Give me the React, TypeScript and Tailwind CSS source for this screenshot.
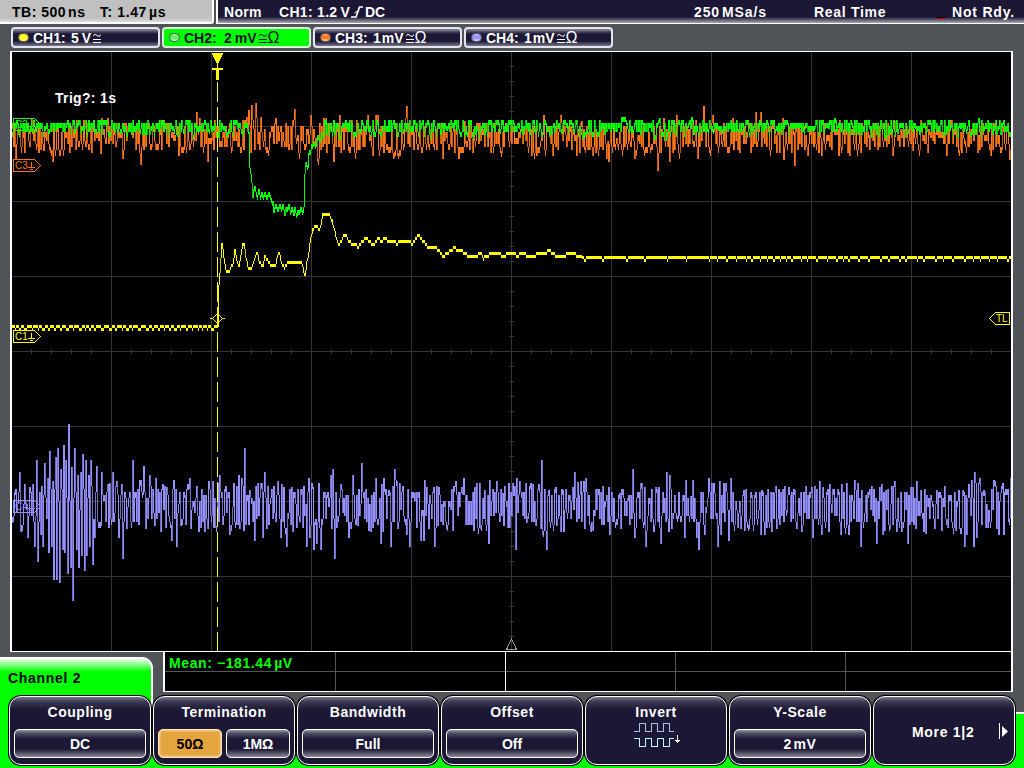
import React from "react";
import clsx from "clsx";

type Point = [number, number];

const LEFT = 12;
const RIGHT = 1011;

// Small seeded generator so the noise is the same on every render
function makeRandom(seed: number) {
  let s = seed;
  return () => {
    s = (s * 1664525 + 1013904223) % 4294967296;
    return s / 4294967296;
  };
}

// The scope draws in 3px vertical steps
const snap = (y: number) => Math.round(y / 3) * 3;

function noise(center: number, spread: number, hold: number, seed: number) {
  const rand = makeRandom(seed);
  const values: number[] = [];
  let current = center;
  for (let x = LEFT; x < RIGHT; x++) {
    if (rand() > hold) {
      // mostly swings to the other side of the center line
      const sign = current > center ? -1 : 1;
      const side = rand() < 0.8 ? sign : -sign;
      const size = (rand() + rand()) / 2;
      current = center + side * size * spread;
    }
    values.push(snap(current));
  }
  return values;
}

function withSpikes(values: number[], spikes: Point[]) {
  const out = [...values];
  spikes.forEach(([x, y]) => {
    if (x >= LEFT && x < RIGHT) out[x - LEFT] = y;
  });
  return out;
}

function withCurve(values: number[], points: Point[]) {
  const out = [...values];
  for (let i = 1; i < points.length; i++) {
    const [x0, y0] = points[i - 1];
    const [x1, y1] = points[i];
    for (let x = x0; x <= x1; x++) {
      out[x - LEFT] = snap(y0 + ((y1 - y0) * (x - x0)) / Math.max(1, x1 - x0));
    }
  }
  return out;
}

// One vertical bar per pixel column, some of the long edges go in the dim path
function toBars(values: number[], minHeight = 3) {
  let bright = "";
  let dim = "";
  values.forEach((v, i) => {
    const prev = i === 0 ? v : values[i - 1];
    const top = Math.min(v, prev);
    const height = Math.max(minHeight, Math.abs(v - prev));
    const bar = `M${LEFT + i} ${top}h1v${height}h-1z`;
    if (height > 6 && (i * 7) % 5 < 2) dim += bar;
    else bright += bar;
  });
  return { bright, dim };
}

const CH1_CURVE: Point[] = [
  [217, 328], [218, 285], [219, 272], [221, 243], [223, 257], [225, 269], [229, 269], [232, 263], [234, 250], [236, 262],
  [238, 267], [240, 255], [242, 242], [243, 242], [245, 258], [247, 266], [251, 267], [254, 258], [256, 251], [258, 260],
  [262, 266], [264, 254], [267, 262], [272, 264], [275, 263], [278, 251], [280, 261], [284, 267], [287, 261], [290, 260],
  [292, 263], [294, 260], [300, 261], [302, 268], [304, 276], [306, 262], [308, 252], [310, 236], [312, 229], [314, 224],
  [316, 226], [318, 230], [320, 225], [322, 213], [328, 213], [331, 220], [334, 232], [336, 241], [339, 243], [344, 233],
  [348, 241], [354, 243], [358, 246], [361, 241], [365, 236], [369, 241], [373, 245], [377, 237], [380, 240], [385, 237],
  [388, 242], [391, 239], [396, 243], [401, 239], [404, 242], [408, 239], [411, 243], [414, 239], [418, 234], [421, 239],
  [427, 246], [434, 246], [438, 250], [442, 255], [448, 251], [453, 247], [459, 249], [465, 253], [469, 257], [474, 254],
  [480, 253], [482, 258], [486, 254], [498, 251], [502, 258], [504, 254], [512, 251], [516, 255], [520, 252], [530, 255],
  [535, 254], [539, 251], [545, 253], [547, 249], [554, 254], [562, 255], [567, 253], [571, 251], [576, 255], [580, 256],
];

const CH2_CURVE: Point[] = [
  [247, 130], [248, 132], [249, 168], [250, 174], [251, 184], [252, 198], [253, 189], [254, 186], [255, 192], [257, 195],
  [258, 190], [259, 196], [261, 193], [262, 199], [264, 193], [266, 197], [268, 191], [270, 199], [272, 201], [273, 213],
  [275, 203], [277, 210], [279, 204], [281, 210], [282, 204], [284, 216], [285, 206], [287, 210], [288, 204], [290, 213],
  [291, 207], [293, 215], [294, 208], [296, 216], [297, 209], [299, 213], [300, 207], [302, 214], [303, 207], [304, 175],
  [305, 163], [307, 169], [308, 152], [310, 150], [311, 143], [312, 148], [313, 141], [315, 147], [317, 136], [319, 141],
  [321, 132], [323, 136],
];

const CH2_SPIKES: Point[] = [
  [132, 120], [161, 120], [189, 120], [204, 120], [218, 138], [226, 135], [427, 120], [433, 120], [512, 120], [625, 120],
  [659, 118], [678, 120], [773, 120], [834, 118], [871, 138], [884, 138], [957, 138], [978, 118], [1003, 120], [665, 141],
];

const CH3_SPIKES: Point[] = [
  [15, 159], [20, 147], [31, 118], [38, 153], [43, 151], [52, 162], [59, 153], [83, 120], [100, 154], [101, 118],
  [107, 118], [122, 159], [135, 150], [140, 165], [155, 150], [178, 156], [189, 150], [196, 112], [199, 118], [207, 162],
  [213, 150], [231, 151], [240, 151], [244, 120], [246, 117], [248, 110], [249, 125], [251, 105], [252, 120], [255, 103],
  [256, 118], [260, 117], [265, 150], [275, 118], [285, 123], [294, 109], [304, 144], [310, 115], [317, 162], [318, 159],
  [323, 118], [325, 118], [333, 162], [339, 115], [348, 151], [357, 150], [367, 115], [372, 156], [375, 115], [377, 115],
  [387, 150], [394, 152], [397, 156], [405, 118], [406, 106], [421, 153], [442, 159], [458, 159], [464, 121], [472, 153],
  [490, 153], [500, 151], [531, 156], [536, 156], [543, 115], [552, 156], [560, 115], [576, 156], [581, 121], [592, 156],
  [606, 159], [608, 162], [634, 159], [644, 153], [657, 171], [663, 118], [669, 162], [672, 153], [676, 115], [697, 159],
  [703, 106], [709, 150], [712, 115], [732, 118], [750, 153], [755, 112], [760, 112], [776, 153], [782, 118], [783, 160],
  [791, 153], [794, 166], [807, 156], [821, 156], [838, 156], [849, 156], [855, 121], [877, 150], [892, 156], [895, 121],
  [912, 151], [946, 156], [958, 153], [961, 153], [990, 156], [1009, 160],
];

const CH4_SPIKES: Point[] = [
  [12, 517], [19, 472], [20, 532], [24, 484], [27, 538], [29, 487], [32, 484], [34, 547], [36, 460], [37, 562],
  [40, 535], [42, 547], [44, 463], [47, 478], [48, 553], [49, 451], [51, 547], [52, 481], [53, 580], [55, 457],
  [56, 580], [57, 448], [59, 583], [60, 469], [62, 550], [63, 445], [64, 553], [65, 460], [67, 574], [68, 424],
  [70, 568], [71, 467], [72, 601], [74, 448], [76, 550], [77, 475], [78, 568], [80, 472], [81, 556], [82, 454],
  [84, 571], [85, 460], [86, 556], [88, 475], [89, 547], [90, 460], [92, 565], [94, 538], [96, 466], [100, 526],
  [101, 472], [107, 484], [112, 472], [116, 481], [118, 538], [121, 484], [122, 559], [126, 529], [132, 460], [143, 466],
  [145, 529], [149, 475], [154, 526], [155, 478], [160, 532], [162, 484], [166, 487], [171, 541], [176, 547], [180, 526],
  [187, 484], [189, 478], [190, 529], [198, 532], [204, 532], [207, 529], [208, 481], [212, 481], [216, 526], [219, 475],
  [229, 535], [238, 475], [239, 529], [241, 478], [244, 448], [249, 490], [254, 541], [262, 538], [264, 472], [266, 529],
  [277, 481], [280, 538], [281, 484], [283, 487], [286, 547], [291, 487], [292, 532], [306, 547], [308, 478], [309, 538],
  [312, 487], [313, 550], [316, 544], [320, 550], [330, 475], [331, 529], [332, 469], [334, 559], [340, 484], [348, 538],
  [350, 529], [352, 475], [357, 526], [361, 463], [370, 532], [375, 478], [380, 544], [381, 484], [382, 532], [383, 478],
  [388, 490], [390, 547], [394, 469], [396, 481], [397, 529], [406, 535], [409, 547], [413, 493], [420, 541], [423, 541],
  [426, 487], [428, 529], [433, 487], [434, 547], [437, 526], [438, 487], [446, 529], [455, 481], [461, 487], [463, 478],
  [474, 487], [480, 529], [484, 490], [488, 544], [496, 481], [502, 493], [503, 526], [513, 496], [515, 550], [516, 478],
  [519, 481], [526, 523], [532, 484], [535, 526], [538, 484], [540, 529], [541, 460], [542, 535], [546, 550], [548, 490],
  [555, 487], [556, 526], [560, 532], [562, 490], [563, 532], [572, 487], [574, 472], [577, 482], [580, 481], [583, 481],
  [584, 529], [585, 478], [590, 532], [608, 487], [609, 535], [619, 493], [620, 529], [632, 469], [634, 538], [644, 487],
  [645, 547], [653, 532], [655, 487], [658, 487], [660, 544], [666, 472], [668, 532], [669, 475], [671, 529], [684, 538],
  [690, 496], [696, 538], [698, 550], [704, 535], [708, 478], [714, 493], [717, 547], [719, 481], [720, 535], [728, 541],
  [730, 478], [740, 529], [743, 490], [748, 529], [760, 535], [761, 490], [764, 535], [771, 532], [774, 493], [776, 529],
  [788, 487], [794, 490], [796, 529], [801, 532], [811, 487], [812, 538], [819, 481], [821, 535], [822, 487], [828, 532],
  [829, 484], [840, 535], [841, 484], [848, 535], [855, 490], [860, 547], [861, 490], [876, 544], [879, 487], [881, 484],
  [882, 535], [885, 490], [889, 529], [894, 481], [896, 532], [901, 532], [907, 544], [910, 487], [912, 487], [915, 529],
  [916, 481], [920, 490], [923, 532], [934, 529], [936, 490], [958, 490], [959, 529], [962, 490], [964, 547], [966, 535],
  [968, 484], [973, 547], [974, 472], [976, 538], [979, 478], [983, 490], [994, 481], [996, 529], [998, 535], [1000, 493],
  [1003, 535], [1010, 478],
];

// CH1 flips between two adjacent levels when it is idle
function idleCh1() {
  const rand = makeRandom(11);
  const values: number[] = [];
  let high = true;
  let left = 3;
  for (let x = LEFT; x < RIGHT; x++) {
    left -= 1;
    if (left <= 0) {
      high = !high;
      left = x < 217 ? 2 + Math.floor(rand() * 3) : high ? 3 + Math.floor(rand() * 7) : 2 + Math.floor(rand() * 2);
      if (x > 580 && x < 700 && high) left += 12;
    }
    if (x < 217) values.push(high ? 325 : 328);
    else values.push(high ? 256 : 259);
  }
  return values;
}

const ch1 = toBars(withCurve(idleCh1(), CH1_CURVE));
const ch2 = toBars(withCurve(withSpikes(noise(127, 9, 0.15, 5), CH2_SPIKES), CH2_CURVE), 5);
const ch3 = toBars(withSpikes(noise(137, 18, 0.2, 29), CH3_SPIKES), 6);
const ch4 = toBars(withSpikes(noise(506, 28, 0.12, 83), CH4_SPIKES), 6);

function Trace({ bars, color }: { bars: { bright: string; dim: string }; color: string }) {
  return (
    <g fill={color}>
      <path d={bars.dim} opacity={0.75} />
      <path d={bars.bright} />
    </g>
  );
}

function Flag({ y, label, color }: { y: number; label: string; color: string }) {
  return (
    <g stroke={color} fill="none">
      <path d={`M13.5 ${y + 0.5}H34.5L40.5 ${y + 6.5}L34.5 ${y + 12.5}H13.5z`} />
      <path d={`M31.5 ${y + 3}v5M28 ${y + 8.5}h7M30 ${y + 10.5}h3`} />
      <text x={15} y={y + 10} fontSize={10} fill={color} stroke="none">
        {label}
      </text>
    </g>
  );
}

function Plot() {
  const columns = [111, 211, 311, 411, 511, 611, 711, 811, 911];
  const rows = [126, 201, 276, 351, 426, 501, 576];
  const ticks: string[] = [];
  for (let x = 31; x < RIGHT; x += 20) ticks.push(`M${x} 349h1v5h-1z`);
  for (let y = 66; y < 650; y += 15) ticks.push(`M509 ${y}h5v1h-5z`);

  return (
    <svg
      width={999}
      height={599}
      viewBox="12 52 999 599"
      shapeRendering="crispEdges"
      fontFamily="Liberation Sans, sans-serif"
      fontWeight={400}
      className="block"
    >
      <path
        fill="#363636"
        d={columns.map((x) => `M${x} 52h1v599h-1z`).join("") + rows.map((y) => `M12 ${y}h999v1h-999z`).join("") + ticks.join("")}
      />
      <path d="M506.5 649.5L511.5 639L516.5 649.5z" fill="none" stroke="#999" />

      <Trace bars={ch4} color="#9490ff" />
      <Flag y={500} label="C4" color="#9490ff" />
      <Trace bars={ch3} color="#ff7518" />
      <Flag y={159} label="C3" color="#ff7518" />
      <Flag y={118} label="C2" color="#00ff00" />
      <Trace bars={ch2} color="#00ff00" />

      {/* Trigger position */}
      <path d="M217.5 82V651" stroke="#ffff00" strokeDasharray="20 5" />
      <path d="M212 53h11v2h-1v2h-1v2h-1v2h-1v2h-1v5h5v2h-4v10h-3v-10h-4v-2h5v-5h-1v-2h-1v-2h-1v-2h-1v-2h-1z" fill="#ffff00" />

      <Trace bars={ch1} color="#ffff00" />
      <Flag y={330} label="C1" color="#ffff00" />
      <path d="M210 318.5h3M222 318.5h3M212.5 318.5l5-5l5 5l-5 5z" fill="none" stroke="#ffff00" />

      {/* Trigger level */}
      <path d="M989.5 318.5l6-6h14v12h-14z" fill="none" stroke="#ffff00" />
      <text x={996} y={322} fontSize={10} fill="#ffff00">
        TL
      </text>

      <text x={55} y={103} fontSize={14} fontWeight={700} fill="#fff" textLength={61}>
        Trig?: 1s
      </text>
    </svg>
  );
}

const channels = [
  { name: "CH1:", value: "5", unit: "V", ohm: false, dot: "bg-[#ffff00]", active: false },
  { name: "CH2:", value: "2", unit: "mV", ohm: true, dot: "bg-[#60f060]", active: true },
  { name: "CH3:", value: "1", unit: "mV", ohm: true, dot: "bg-[#ff7518]", active: false },
  { name: "CH4:", value: "1", unit: "mV", ohm: true, dot: "bg-[#9490ff]", active: false },
];

function CouplingIcon() {
  return (
    <svg width="8" height="10" viewBox="0 0 8 10" fill="none" stroke="currentColor" className="ml-[2px]">
      <path d="M0.500 3.200V2.500Q0.700 1.500 2 1.500Q3 1.500 4 2.500Q5 3.300 6 3.300Q7.500 3.200 7.500 1.500" />
      <path d="M0 6.500h8M0 9.500h8" shapeRendering="crispEdges" />
    </svg>
  );
}

function ChannelTab({ channel }: { channel: (typeof channels)[number] }) {
  return (
    <div
      className={clsx(
        "flex h-[21px] w-[149px] items-center rounded-[4px] border-2 pl-[5px] text-[14px]",
        channel.active
          ? "border-[#d8ffd8] bg-[#00ff00] text-[#10102c]"
          : "border-[#e4e4ec] bg-[linear-gradient(#8b899c_0,#1b1734_5px,#1b1734_12px,#77758a_17px)] text-white"
      )}
    >
      <span
        className={clsx(
          "h-[9px] w-[11px] rounded-full border border-[#555] bg-[linear-gradient(#ffffff60,transparent_40%,transparent_60%,#ffffffb0)]",
          channel.dot
        )}
      ></span>
      <span className="ml-[4px] w-[38px] pt-px">{channel.name}</span>
      <span className={clsx("pt-px", channel.active && "ml-[2px]")}>{channel.value}</span>
      <span className={clsx("pt-px", channel.value === "1" ? "ml-px" : "ml-[3px]")}>{channel.unit}</span>
      <CouplingIcon />
      {channel.ohm && <span className="ml-px pt-px text-[16px] font-normal">Ω</span>}
    </div>
  );
}

function MenuButton({ title, children }: { title?: string; children: React.ReactNode }) {
  return (
    <div className="h-[71px] w-[144px] rounded-[13px] bg-black p-px">
      <div className="flex h-full flex-col rounded-[12px] border border-white bg-[linear-gradient(#77758c_0,#3a3751_5px,#1b1734_13px)] px-[4px] pt-[7px]">
        {title && <div className="h-[17px] text-center leading-[17px] tracking-[0.55px]">{title}</div>}
        {children}
      </div>
    </div>
  );
}

function Field({ children, selected = false }: { children: React.ReactNode; selected?: boolean }) {
  return (
    <div
      className={clsx(
        "flex h-[29px] flex-1 items-center justify-center rounded-[5px] border pt-px",
        selected
          ? "border-[#ffe6bf] bg-[#e5a53e] text-black shadow-[inset_0_0_3px_#fff]"
          : "border-white bg-[linear-gradient(#9896a6_0,#55536a_3px,#1b1734_9px,#1b1734_19px,#8a8898_27px)]"
      )}
    >
      {children}
    </div>
  );
}

export default function App() {
  return (
    <div className="flex h-[768px] w-[1024px] flex-col overflow-hidden bg-[#505357] font-['Liberation_Sans',Arial,sans-serif] text-[14px] font-bold whitespace-nowrap text-white">
      {/* Status bar */}
      <header className="flex h-[24px] gap-[2px] leading-[22px]">
        <div className="flex w-[214px] rounded-br-[3px] border-r-2 border-b-2 border-white bg-[linear-gradient(#c0c0c0_18px,#ddd)] pt-px pl-[12px] text-black">
          <span className="w-[88px] tracking-[0.5px]">TB: 500<span className="ml-[2px]">ns</span></span>
          <span className="tracking-[0.6px]">T: 1.47<span className="ml-[2px]">µs</span></span>
        </div>
        <div className="flex flex-1 border-b border-l-2 border-white bg-[linear-gradient(#1b1734_17px,#aaa9b5_23px)] pt-px pl-[6px] tracking-[0.5px]">
          <span className="w-[55px] tracking-[0.3px]">Norm</span>
          <span className="w-[72px] tracking-[0.3px]">CH1: 1.2<span className="ml-[3px]">V</span></span>
          <svg width="12" height="12" viewBox="0 0 12 12" className="mt-[5px]">
            <path d="M0 11h5L8.500 1H12" fill="none" stroke="#fff" strokeWidth="1.7" />
            <path d="M3.500 7L6 5.500H8" fill="none" stroke="#fff" />
          </svg>
          <span className="ml-[2px] w-[329px] tracking-normal">DC</span>
          <span className="w-[120px] tracking-[0.9px]">250<span className="ml-[2px]">MSa/s</span></span>
          <span className="w-[123px] tracking-[0.7px]">Real Time</span>
          <span className="mt-[16px] mr-[7px] h-[2px] w-[8px] border-b border-[#d00000] bg-black"></span>
          <span className="tracking-[0.8px]">Not Rdy.</span>
        </div>
      </header>

      <div className="mt-[3px] flex gap-[2px] pl-[11px]">
        {channels.map((channel) => (
          <ChannelTab key={channel.name} channel={channel} />
        ))}
      </div>

      <main className="mt-[3px] ml-[10px] w-[1003px] border-x-2 border-y border-white bg-black">
        <Plot />
      </main>

      <div className="flex h-[43px]">
        {/* Name of the open menu */}
        <div className="mt-[5px] h-[52px] w-[153px] rounded-tr-[11px] border-t border-r-2 border-white bg-[linear-gradient(#ffffff_0,#00ff00_14px)] pt-[12px] pl-[8px] leading-[17px] tracking-[0.7px] text-black">
          Channel 2
        </div>
        <div className="ml-[10px] grid h-[40px] w-[850px] grid-cols-[171px_170px_170px_170px_165px] grid-rows-[20px_19px] border-r-2 border-b border-l-2 border-white bg-black">
          <div className="border-r border-b border-[#555] pl-[4px] leading-[22px] tracking-[0.6px] text-[#00ff00]">
            Mean: −181.44<span className="ml-[2px]">µV</span>
          </div>
          <div className="border-r border-b border-r-white border-b-[#555]"></div>
          <div className="border-r border-b border-[#555]"></div>
          <div className="border-r border-b border-[#555]"></div>
          <div className="border-b border-[#555]"></div>
          <div className="border-r border-[#555]"></div>
          <div className="border-r border-white"></div>
          <div className="border-r border-[#555]"></div>
          <div className="border-r border-[#555]"></div>
        </div>
      </div>

      <footer className="z-10 flex h-[73px] bg-[linear-gradient(transparent_60px,#00ff00_60px)]">
        <div className="w-[8px] bg-[#00ff00]"></div>
        <MenuButton title="Coupling">
          <div className="mt-[8px] flex">
            <Field>DC</Field>
          </div>
        </MenuButton>
        <MenuButton title="Termination">
          <div className="mt-[8px] flex gap-[4px]">
            <Field selected>50Ω</Field>
            <Field>1MΩ</Field>
          </div>
        </MenuButton>
        <MenuButton title="Bandwidth">
          <div className="mt-[8px] flex">
            <Field>Full</Field>
          </div>
        </MenuButton>
        <MenuButton title="Offset">
          <div className="mt-[8px] flex">
            <Field>Off</Field>
          </div>
        </MenuButton>
        <MenuButton title="Invert">
          <svg width="48" height="26" viewBox="0 0 48 26" fill="none" shapeRendering="crispEdges" className="mx-auto mt-[2px]">
            <path d="M2 8.500h5v-8h6v8h6v-8h6v8h6v-8h6v8h5" stroke="#a9c3e8" />
            <path d="M2 15.500h5v8h6v-8h6v8h6v-8h6v8h6v-8h5" stroke="#c4f4ff" />
            <path d="M45.500 12v8M43 17.500h5M44 18.500h3" stroke="#fff" />
          </svg>
        </MenuButton>
        <MenuButton title="Y-Scale">
          <div className="mt-[8px] flex">
            <Field>2<span className="ml-[2px] tracking-[0.6px]">mV</span></Field>
          </div>
        </MenuButton>
        <MenuButton>
          <div className="flex flex-1 items-center pb-[4px] pl-[34px] tracking-[0.7px]">
            <span className="w-[87px]">More 1|2</span>
            <svg width="10" height="16" viewBox="0 0 10 16" className="mb-[2px]">
              <path d="M0.500 0v16" stroke="#fff" />
              <path d="M3 3v11l6-5.500z" fill="#fff" />
            </svg>
          </div>
        </MenuButton>
        <div className="mt-[17px] flex-1 border-t-2 border-white bg-[#00ff00]"></div>
      </footer>
    </div>
  );
}
